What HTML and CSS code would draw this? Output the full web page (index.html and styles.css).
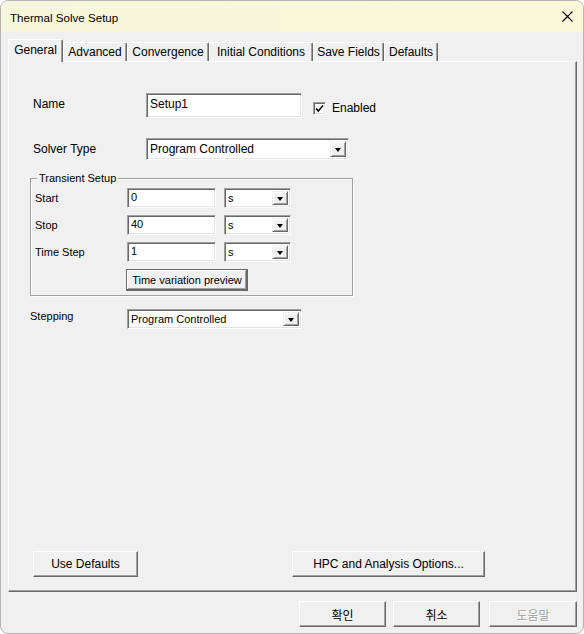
FILE: index.html
```html
<!DOCTYPE html>
<html>
<head>
<meta charset="utf-8">
<link rel="stylesheet" href="styles.css">
</head>
<body>
<div class="window">
  <div class="titlebar">
    <span class="title">Thermal Solve Setup</span>
    <span class="close"><svg width="11" height="11" viewBox="0 0 11 11"><path d="M0.5 0.5 L10.5 10.5 M10.5 0.5 L0.5 10.5" stroke="#000" stroke-width="1.1" fill="none"/></svg></span>
  </div>
  <div class="client">
    <div class="tabs">
      <div class="tab active t-general">General</div>
      <div class="tab t-adv">Advanced</div>
      <div class="tab t-conv">Convergence</div>
      <div class="tab t-init">Initial Conditions</div>
      <div class="tab t-save">Save Fields</div>
      <div class="tab t-def">Defaults</div>
    </div>
    <div class="panel">
      <div class="row row-name">
        <span class="label lbl-main">Name</span>
        <div class="edit edit-name">Setup1</div>
        <span class="check"><svg width="9" height="9" viewBox="0 0 9 9"><path d="M1 4.5 L3.3 7 L8 1.5" stroke="#000" stroke-width="1.6" fill="none"/></svg></span>
        <span class="check-label">Enabled</span>
      </div>
      <div class="row row-solver">
        <span class="label lbl-main">Solver Type</span>
        <div class="combo combo-solver"><span class="combo-text">Program Controlled</span><span class="drop"><i class="tri"></i></span></div>
      </div>
      <div class="group">
        <span class="legend">Transient Setup</span>
        <div class="grow g-first">
          <span class="glabel">Start</span>
          <div class="edit edit-small">0</div>
          <div class="combo combo-unit"><span class="combo-text">s</span><span class="drop"><i class="tri"></i></span></div>
        </div>
        <div class="grow">
          <span class="glabel">Stop</span>
          <div class="edit edit-small">40</div>
          <div class="combo combo-unit"><span class="combo-text">s</span><span class="drop"><i class="tri"></i></span></div>
        </div>
        <div class="grow">
          <span class="glabel">Time Step</span>
          <div class="edit edit-small">1</div>
          <div class="combo combo-unit"><span class="combo-text">s</span><span class="drop"><i class="tri"></i></span></div>
        </div>
        <div class="grow g-btn">
          <span class="glabel"></span>
          <div class="btn-preview">Time variation preview</div>
        </div>
      </div>
      <div class="row row-step">
        <span class="slabel">Stepping</span>
        <div class="combo combo-step"><span class="combo-text">Program Controlled</span><span class="drop"><i class="tri"></i></span></div>
      </div>
      <div class="spacer"></div>
      <div class="panel-buttons">
        <div class="btn btn-defaults">Use Defaults</div>
        <div class="btn btn-hpc">HPC and Analysis Options...</div>
      </div>
    </div>
    <div class="dialog-buttons">
      <div class="btn dbtn ok">확인</div>
      <div class="btn dbtn cancel">취소</div>
      <div class="btn dbtn help disabled">도움말</div>
    </div>
  </div>
</div>
</body>
</html>
```

FILE: styles.css
```css
html, body {
  margin: 0;
  padding: 0;
  background: #ffffff;
}
body {
  width: 584px;
  height: 634px;
  overflow: hidden;
  font-family: "Liberation Sans", Arial, "Noto Sans CJK KR", sans-serif;
  font-size: 12px;
  color: #000;
}
.window {
  box-sizing: border-box;
  width: 584px;
  height: 634px;
  border: 1px solid #b4b4b4;
  border-radius: 8px;
  background: #f0f0f0;
  overflow: hidden;
  display: flex;
  flex-direction: column;
}
.titlebar {
  height: 31px;
  flex: none;
  background: linear-gradient(to right, #f6f6dc, #f9f9da);
  display: flex;
  align-items: center;
  justify-content: space-between;
  padding: 0 9px 0 9px;
}
.title {
  font-size: 11.6px;
  color: #000;
  padding-top: 1px;
}
.close {
  display: flex;
  width: 11px;
  height: 11px;
  margin-right: 1px;
  margin-top: -1px;
}
.client {
  flex: 1;
  display: flex;
  flex-direction: column;
  padding: 7px 6px 0 7px;
}
.tabs {
  display: flex;
  align-items: flex-end;
  height: 22px;
  position: relative;
  z-index: 2;
}
.tab {
  box-sizing: border-box;
  height: 19px;
  border-top: 1px solid #ffffff;
  border-left: 1px solid #ffffff;
  border-right: 1px solid #696969;
  box-shadow: inset -1px 0 #a0a0a0;
  border-radius: 2px 2px 0 0;
  text-align: center;
  line-height: 19px;
  font-size: 12px;
  background: #f0f0f0;
  white-space: nowrap;
}
.tab.active {
  height: 23px;
  margin-bottom: -1px;
  line-height: 21px;
  padding-bottom: 2px;
}
.t-general { width: 55px; }
.t-adv { width: 64px; }
.t-conv { width: 82px; }
.t-init { width: 104px; }
.t-save { width: 71px; }
.t-def { width: 54px; }

.panel {
  box-sizing: border-box;
  width: 569px;
  height: 531px;
  border-top: 1px solid #ffffff;
  border-left: 1px solid #ffffff;
  border-right: 1px solid #696969;
  border-bottom: 1px solid #696969;
  box-shadow: inset -1px -1px #a0a0a0;
  display: flex;
  flex-direction: column;
  padding: 0 0 14px 0;
}
.row {
  display: flex;
  align-items: center;
}
.row-name {
  margin-top: 31px;
  padding-left: 24px;
  height: 25px;
}
.lbl-main {
  width: 113px;
  flex: none;
  font-size: 12px;
}
.row-name .lbl-main { margin-top: -3px; }
.edit {
  box-sizing: border-box;
  background: #ffffff;
  border-top: 1px solid #a0a0a0;
  border-left: 1px solid #a0a0a0;
  border-right: 1px solid #ffffff;
  border-bottom: 1px solid #ffffff;
  box-shadow: inset 1px 1px #696969, inset -1px -1px #e3e3e3;
  white-space: nowrap;
}
.edit-name {
  width: 156px;
  height: 25px;
  padding: 3px 0 0 3px;
  font-size: 12px;
  align-self: flex-start;
}
.check {
  box-sizing: border-box;
  width: 13px;
  height: 13px;
  margin-left: 11px;
  margin-top: 6px;
  background: #ffffff;
  border-top: 1px solid #a0a0a0;
  border-left: 1px solid #a0a0a0;
  border-right: 1px solid #ffffff;
  border-bottom: 1px solid #ffffff;
  box-shadow: inset 1px 1px #696969, inset -1px -1px #e3e3e3;
  display: flex;
  align-items: center;
  justify-content: center;
}
.check svg { margin-left: 0px; }
.check-label {
  margin-left: 6px;
  margin-top: 5px;
  font-size: 12px;
}
.row-solver {
  margin-top: 20px;
  padding-left: 24px;
  height: 22px;
}
.combo {
  box-sizing: border-box;
  background: #ffffff;
  border-top: 1px solid #a0a0a0;
  border-left: 1px solid #a0a0a0;
  border-right: 1px solid #ffffff;
  border-bottom: 1px solid #ffffff;
  box-shadow: inset 1px 1px #696969, inset -1px -1px #e3e3e3;
  display: flex;
  align-items: stretch;
  padding: 2px;
}
.combo-text {
  flex: 1;
  display: flex;
  align-items: center;
  padding-left: 1px;
  white-space: nowrap;
}
.drop {
  box-sizing: border-box;
  width: 16px;
  flex: none;
  background: #f0f0f0;
  border-top: 1px solid #f0f0f0;
  border-left: 1px solid #f0f0f0;
  border-right: 1px solid #696969;
  border-bottom: 1px solid #696969;
  box-shadow: inset 1px 1px #ffffff, inset -1px -1px #a0a0a0;
  display: flex;
  align-items: center;
  justify-content: center;
}
.tri {
  display: block;
  width: 0;
  height: 0;
  border-left: 3.5px solid transparent;
  border-right: 3.5px solid transparent;
  border-top: 4px solid #000;
  margin-top: 1px;
}
.combo-solver {
  width: 203px;
  height: 22px;
  font-size: 12px;
}
.group {
  box-sizing: border-box;
  margin-top: 18px;
  margin-left: 21px;
  width: 323px;
  height: 118px;
  border: 1px solid #a0a0a0;
  box-shadow: 1px 1px #ffffff, inset 1px 1px #ffffff;
  position: relative;
  padding: 9px 0 0 4px;
  font-size: 11px;
}
.legend {
  position: absolute;
  left: 6px;
  top: -7px;
  background: #f0f0f0;
  padding: 0 2px;
  font-size: 11px;
  line-height: 13px;
}
.grow {
  display: flex;
  align-items: center;
  height: 20px;
  margin-top: 7px;
}
.grow.g-first { margin-top: 0; }
.grow.g-btn { margin-top: 6px; height: 23px; }
.glabel {
  width: 92px;
  flex: none;
  font-size: 11px;
}
.edit-small {
  width: 89px;
  height: 20px;
  padding: 2px 0 0 3px;
  font-size: 11px;
}
.combo-unit {
  margin-left: 8px;
  width: 67px;
  height: 20px;
  font-size: 11px;
  padding: 2px;
}
.combo-unit .drop { width: 16px; }
.btn-preview {
  box-sizing: border-box;
  width: 122px;
  height: 22px;
  margin-left: -1px;
  border: 1px solid #696969;
  box-shadow: inset -1px -1px #696969, inset 1px 1px #ffffff, inset -2px -2px #a0a0a0;
  background: #f0f0f0;
  display: flex;
  align-items: center;
  justify-content: center;
  font-size: 11px;
  white-space: nowrap;
}
.row-step {
  margin-top: 13px;
  padding-left: 21px;
  height: 20px;
}
.slabel {
  width: 97px;
  flex: none;
  font-size: 11px;
  margin-top: -6px;
}
.combo-step {
  width: 175px;
  height: 20px;
  font-size: 11px;
}
.spacer { flex: 1; }
.panel-buttons {
  display: flex;
  padding-left: 24px;
}
.btn {
  box-sizing: border-box;
  height: 26px;
  background: #f0f0f0;
  border-top: 1px solid #ffffff;
  border-left: 1px solid #ffffff;
  border-right: 1px solid #696969;
  border-bottom: 1px solid #696969;
  box-shadow: inset -1px -1px #a0a0a0;
  display: flex;
  align-items: center;
  justify-content: center;
  font-size: 12px;
  white-space: nowrap;
}
.btn-defaults { width: 105px; }
.btn-hpc { width: 193px; margin-left: 154px; }
.dialog-buttons {
  display: flex;
  justify-content: flex-end;
  margin-top: 9px;
  padding-right: 0px;
}
.dbtn {
  width: 87px;
  font-family: "Noto Sans CJK KR", "Liberation Sans", sans-serif;
  font-size: 12px;
}
.cancel { margin-left: 7px; }
.help { margin-left: 9px; width: 88px; }
.disabled {
  color: #a0a0a0;
  text-shadow: 1px 1px #ffffff;
}
```
